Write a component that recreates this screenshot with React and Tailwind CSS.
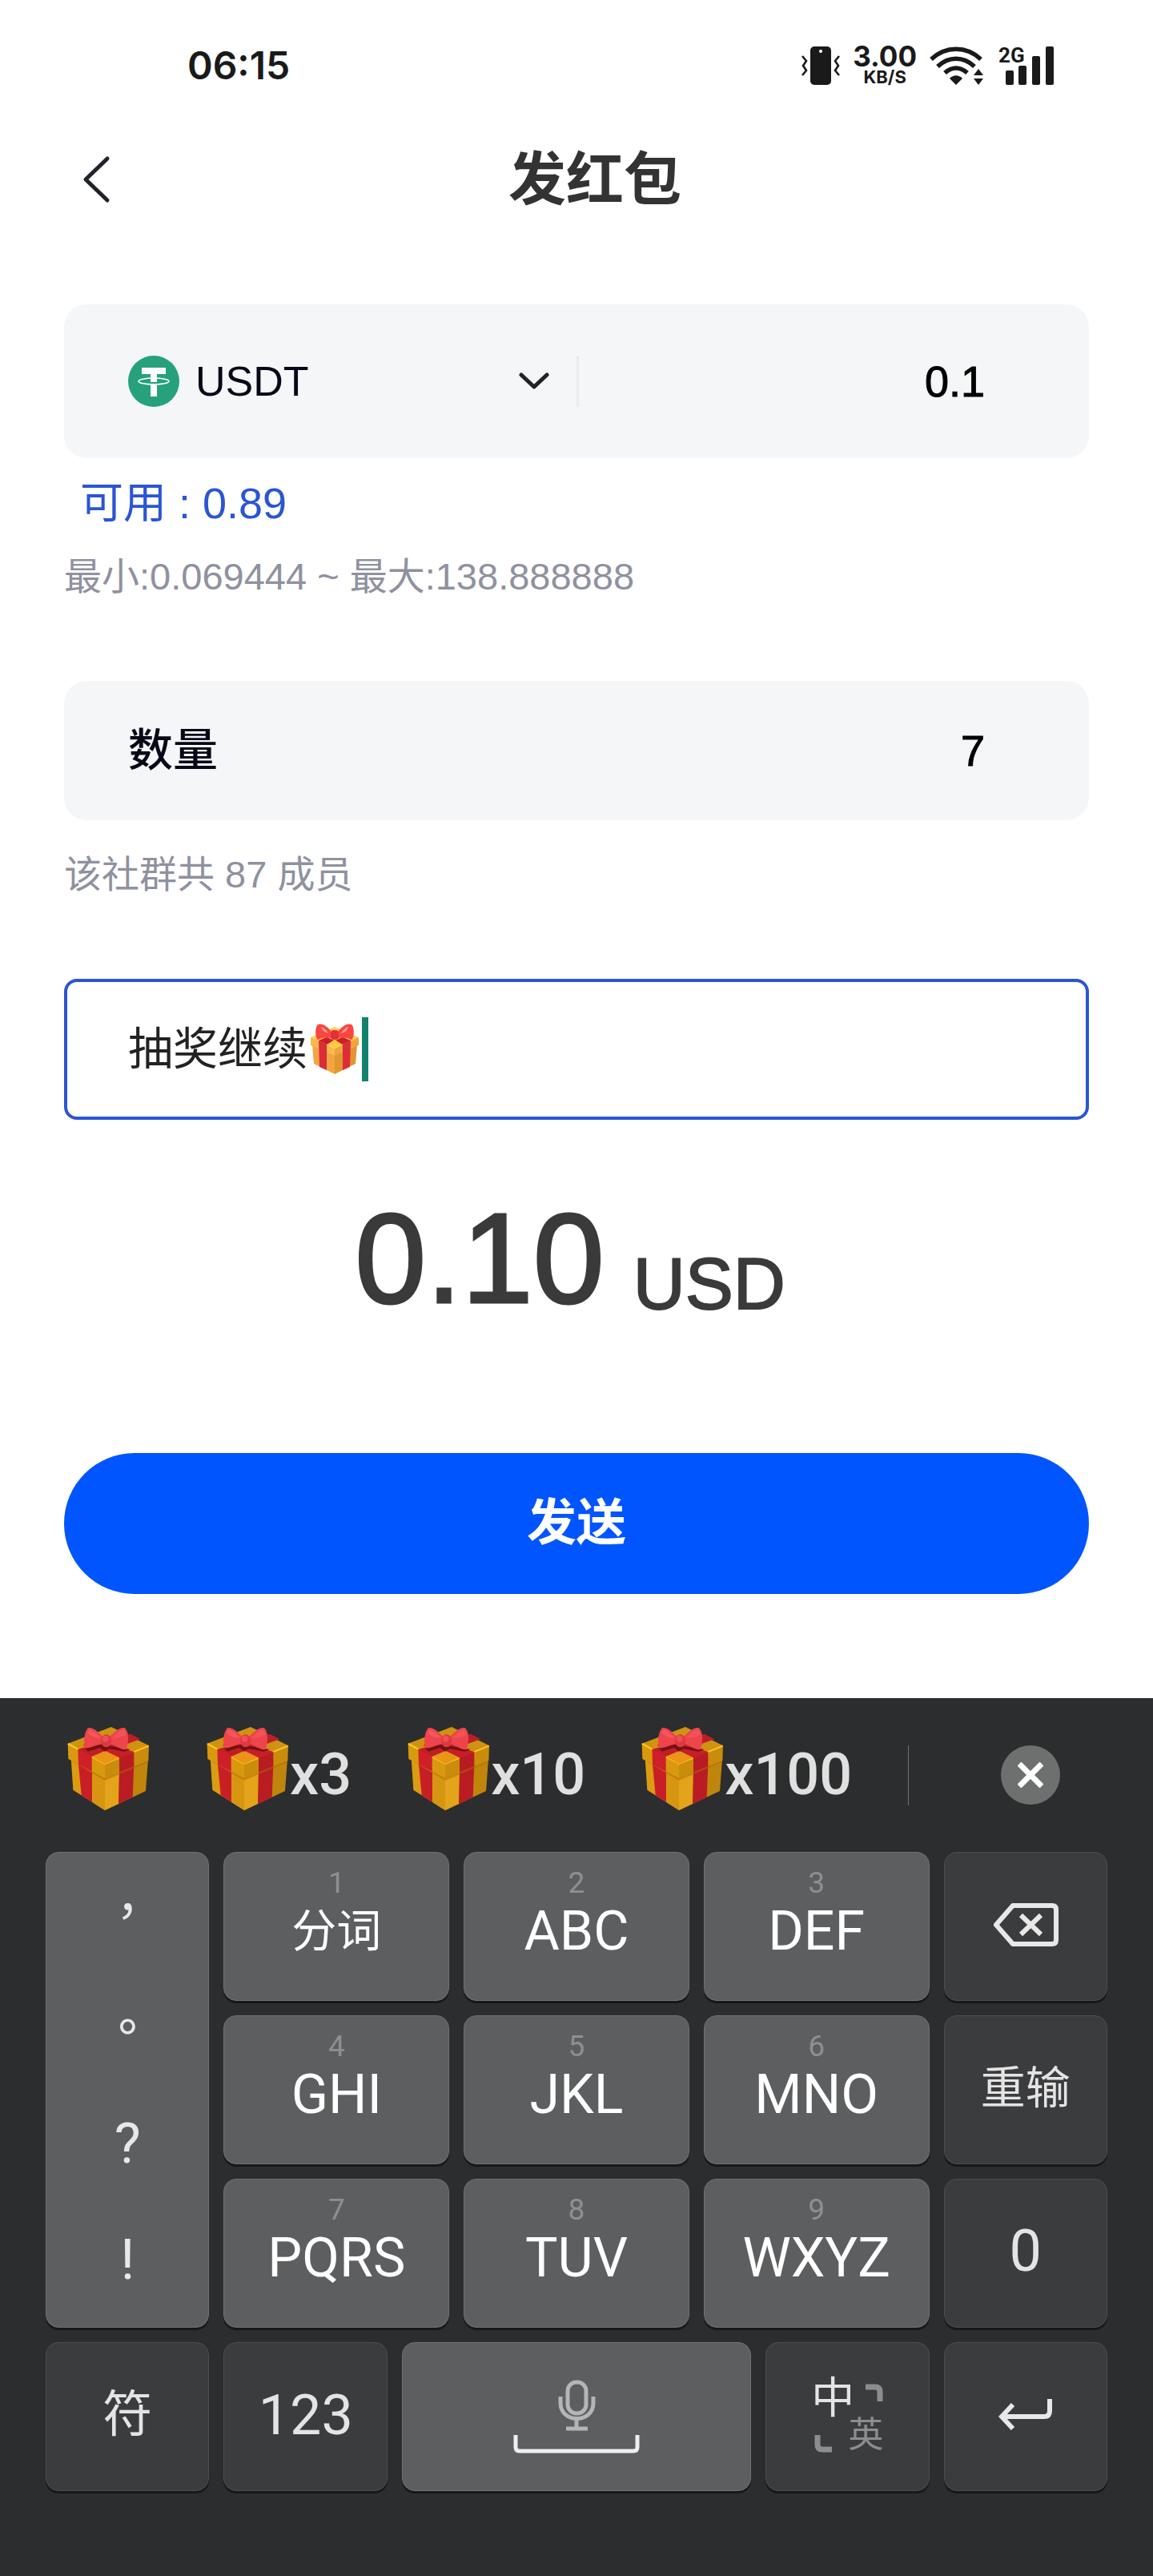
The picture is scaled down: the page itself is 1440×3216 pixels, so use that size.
import { useState } from "react";

const letterKeys = [
  { hint: "1", label: "分词" },
  { hint: "2", label: "ABC" },
  { hint: "3", label: "DEF" },
  { hint: "4", label: "GHI" },
  { hint: "5", label: "JKL" },
  { hint: "6", label: "MNO" },
  { hint: "7", label: "PQRS" },
  { hint: "8", label: "TUV" },
  { hint: "9", label: "WXYZ" },
];

const candidates = ["", "x3", "x10", "x100"];

const lightKey =
  "rounded-2xl border border-[#707173] bg-[#5d5e60] shadow-[0_3px_0_#17181a]";
const darkKey =
  "flex h-[186px] items-center justify-center rounded-2xl border border-[#4c4d4f] bg-[#3b3c3e] pb-1 text-[#e4e4e4] shadow-[0_3px_0_#17181a]";

const GiftBox = () => (
  <svg viewBox="0 0 312 312" className="mb-4 size-[104px] shrink-0" aria-hidden="true">
    {/* box */}
    <path d="M14 118L22 236L141 312V180Z" fill="#dc9c12" />
    <path d="M303 120L294 240L141 312V180Z" fill="#c0850c" />
    <path d="M93 150L97 284L141 312V180Z" fill="#d69612" />
    <path d="M141 180L195 156L192 288L141 312Z" fill="#e3a31a" />
    <path d="M42 140L53 256L93 281V170Z" fill="#c81f27" />
    <path d="M250 140L245 263L192 288L195 165Z" fill="#b91c22" />
    <path d="M13 126L141 200L303 132V120L141 180L13 118Z" fill="#a86c08" opacity=".5" />
    {/* lid */}
    <path d="M2 62L4 120L141 192V136Z" fill="#d9990e" />
    <path d="M306 70L304 126L141 192V136Z" fill="#c98c0c" />
    <path d="M2 62L165 0L306 70L141 140Z" fill="#cf9212" />
    <path d="M90 114L146 88L195 114L141 140Z" fill="#ea9417" />
    <path d="M3 63L141 138L305 71" fill="none" stroke="#fbc722" strokeWidth="6" />
    <path d="M40 82L92 110V167L42 141Z" fill="#cf2029" />
    <path d="M195 114L250 92V148L195 170Z" fill="#b81c22" />
    <path d="M40 84L92 111L274 46L236 26Z" fill="#c01e26" />
    <path d="M82 44L60 70L195 116L250 93Z" fill="#c61f27" />
    <path d="M92 111L142 89L195 115L141 139Z" fill="#ea9418" />
    <path d="M66 80L126 66L236 84L214 92L158 82L140 92L122 78L78 92Z" fill="#741212" />
    {/* bow */}
    <path d="M78 4C90-2 116 16 136 40V64C112 62 84 84 68 78C60 64 62 20 78 4Z" fill="#ee444b" />
    <path d="M216 4C202-2 176 16 156 40V64C178 66 204 90 222 84C224 70 238 28 216 4Z" fill="#ee444b" />
    <path d="M82 10C92 12 110 24 126 42C106 42 88 36 76 22Z" fill="#fb6a6d" opacity=".5" />
    <path d="M212 10C200 12 184 24 168 42C188 42 208 38 222 28Z" fill="#fb6a6d" opacity=".4" />
    <ellipse cx="146" cy="52" rx="20" ry="24" fill="#de3840" />
    <ellipse cx="143" cy="44" rx="11" ry="12" fill="#f45c61" opacity=".7" />
  </svg>
);

const SmallGift = () => (
  <svg viewBox="0 0 60 64" className="h-16 w-15 shrink-0" aria-hidden="true">
    <path d="M2 26L30 34V63L4 50Z" fill="#f2a640" />
    <path d="M58 26L30 34V63L56 50Z" fill="#e2962f" />
    <path d="M0 17L30 4L60 17L30 31Z" fill="#ffd04f" />
    <path d="M0 17L30 31V40L0 27Z" fill="#fbb84e" />
    <path d="M60 17L30 31V40L60 27Z" fill="#efa53c" />
    <path d="M10 21L20 26V58L11 54Z" fill="#dc2b3a" />
    <path d="M50 21L40 26V58L49 54Z" fill="#dc2b3a" />
    <path d="M10 21L42 8L50 12L20 26ZM50 21L18 8L10 12L40 26Z" fill="#c81f2b" />
    <path d="M30 20L38 25L30 30L22 25Z" fill="#ffc83d" />
    <path d="M28 14C22 2 12-2 8 2C5 8 6 18 9 20C16 17 23 17 28 19Z" fill="#fb4540" />
    <path d="M32 14C38 2 48-2 52 2C55 8 54 18 51 20C44 17 37 17 32 19Z" fill="#fb4540" />
    <path d="M13 4C17 5 20 8 22 12C17 11 14 8 13 4ZM47 4C43 5 40 8 38 12C43 11 46 8 47 4Z" fill="#ff9a94" />
    <rect x="25" y="8" width="10" height="12" rx="4" fill="#e2303a" />
  </svg>
);

const StatusBar = () => (
  <div className="flex h-[164px] items-center justify-between pr-[124px] pl-[234px] font-['Inter',sans-serif] font-semibold text-[#1a1a1a]">
    <span className="text-[48px] leading-none">06:15</span>
    <div className="flex items-center">
      {/* vibrate */}
      <svg viewBox="0 0 48 48" className="mr-4 size-12" fill="none" stroke="#1a1a1a" strokeWidth="2.6">
        <rect x="11" y="0" width="26" height="48" rx="5" fill="#1a1a1a" stroke="none" />
        <circle cx="24" cy="6" r="2" fill="#fff" stroke="none" />
        <path d="M1 12L6 18L2 24L6 30L1 36M47 12L42 18L46 24L42 30L47 36" />
      </svg>
      <div className="mr-4 flex flex-col items-center font-bold">
        <span className="text-[35px] leading-7">3.00</span>
        <span className="text-[22px] leading-6">KB/S</span>
      </div>
      {/* wifi */}
      <svg viewBox="0 0 67 48" className="mr-5 h-12 w-[67px]" fill="none" stroke="#1a1a1a" strokeWidth="5.5">
        <path d="M2 16C20-1 46-1 64 16M10 25C24 12 42 12 56 25M19 33C28 25 38 25 47 33" />
        <path d="M25 40C30 35 36 35 41 40L33 48Z" fill="#1a1a1a" stroke="none" />
        <path d="M55 36L61 28L67 36ZM55 40L61 48L67 40Z" fill="#1a1a1a" stroke="none" />
      </svg>
      {/* signal */}
      <svg viewBox="0 0 68 48" className="h-12 w-[68px] overflow-visible" fill="#1a1a1a">
        <text x="-1" y="20" className="font-['Roboto',sans-serif] text-[26px] font-bold">2G</text>
        <rect x="8" y="30" width="10" height="18" rx="2" />
        <rect x="24" y="24" width="10" height="24" rx="2" />
        <rect x="41" y="12" width="10" height="36" rx="2" />
        <rect x="58" y="0" width="10" height="48" rx="2" />
      </svg>
    </div>
  </div>
);

const Keyboard = () => (
  <section className="grow bg-[#2c2d2f] pb-[106px] font-['Roboto','Noto_Sans_CJK_SC',sans-serif]">
    {/* Candidates */}
    <div className="flex h-48 items-center gap-[70px] pr-[116px] pl-[84px]">
      {candidates.map((text) => (
        <button key={text} aria-label={`礼物${text}`} className="flex items-center text-[72px] leading-none font-medium text-[#e0e0e0]">
          <GiftBox />
          {text}
        </button>
      ))}
      <span className="h-[75px] w-px bg-[#707173]" />
      <button aria-label="关闭" className="ml-auto flex size-[74px] items-center justify-center rounded-full bg-[#6e706f]">
        <svg viewBox="0 0 32 32" className="size-8" stroke="#fff" strokeWidth="7">
          <path d="M2 2L30 30M30 2L2 30" />
        </svg>
      </button>
    </div>

    <div className="flex flex-col gap-[18px] px-[57px]">
      <div className="grid grid-cols-[204fr_879fr_204fr] gap-[18px]">
        {/* Punctuation */}
        <div className={`${lightKey} grid grid-rows-4 pb-3 text-[#e8e8e8]`}>
          <button className="pb-2 font-['Noto_Sans_CJK_TC',sans-serif] text-[60px] leading-none" lang="zh-TW">，</button>
          <button className="pb-2 font-['Noto_Sans_CJK_TC',sans-serif] text-[60px] leading-none font-medium" lang="zh-TW">。</button>
          <button className="text-[70px] leading-none">?</button>
          <button className="text-[70px] leading-none">!</button>
        </div>

        {/* Letters */}
        <div className="grid grid-cols-3 gap-[18px]">
          {letterKeys.map(({ hint, label }) => (
            <button key={hint} className={`${lightKey} flex h-[186px] flex-col items-center pt-[18px] text-white`}>
              <span className="text-[37px] leading-10 text-[#8e8f91]">{hint}</span>
              <span className={`leading-20 ${hint === "1" ? "text-[56px]" : "text-[68px]"}`}>{label}</span>
            </button>
          ))}
        </div>

        <div className="flex flex-col gap-[18px]">
          <button aria-label="删除" className={darkKey}>
            <svg viewBox="0 0 82 54" className="h-[54px] w-[82px]" fill="none" stroke="#e8e8e8" strokeWidth="6">
              <path d="M25 3H74Q79 3 79 8V46Q79 51 74 51H25L4 27Z" strokeLinejoin="round" />
              <path d="M35 15L60 39M60 15L35 39" />
            </svg>
          </button>
          <button className={`${darkKey} text-[56px] leading-none`}>重输</button>
          <button className={`${darkKey} text-[72px] leading-none`}>0</button>
        </div>
      </div>

      <div className="grid grid-cols-[204fr_204fr_435fr_204fr_204fr] gap-[18px]">
        <button className={`${darkKey} text-[62px] leading-none`}>符</button>
        <button className={`${darkKey} text-[70px] leading-none`}>123</button>
        <button aria-label="空格" className={`${lightKey} flex items-center justify-center`}>
          <svg viewBox="0 0 158 92" className="h-[92px] w-[158px]" fill="none" strokeWidth="5">
            <g stroke="#b4b5b6">
              <rect x="68" y="3" width="23" height="39" rx="11" />
              <path d="M59 21V29C59 55 100 55 100 29V21M79 50V60M66 61H93" />
            </g>
            <path d="M3 69V84Q3 89 8 89H150Q155 89 155 84V69" stroke="#efefef" />
          </svg>
        </button>
        <button aria-label="中英切换" className={darkKey}>
          <span className="grid grid-cols-[46px_44px] grid-rows-[50px_44px]">
            <span className="text-[54px] leading-[54px]">中</span>
            <svg viewBox="0 0 22 22" className="mt-2 size-[22px] justify-self-end" fill="none" stroke="#8c8d8f" strokeWidth="7">
              <path d="M0 4H12Q18 4 18 10V22" />
            </svg>
            <svg viewBox="0 0 22 22" className="ml-1 size-[22px] self-end" fill="none" stroke="#8c8d8f" strokeWidth="7">
              <path d="M4 0V12Q4 18 10 18H22" />
            </svg>
            <span className="text-[44px] leading-[44px] text-[#8c8d8f]">英</span>
          </span>
        </button>
        <button aria-label="换行" className={darkKey}>
          <svg viewBox="0 0 68 40" className="h-10 w-[68px]" fill="none" stroke="#e8e8e8" strokeWidth="6">
            <path d="M64 0V15Q64 22 57 22H5M18 7L4 22L18 37" />
          </svg>
        </button>
      </div>
    </div>
  </section>
);

const App = () => {
  const [amount, setAmount] = useState("0.1");
  const [count, setCount] = useState("7");
  const [message, setMessage] = useState("抽奖继续");

  return (
    <div className="flex min-h-screen flex-col bg-white font-['Liberation_Sans','Noto_Sans_CJK_SC',sans-serif]" lang="zh-CN">
      <StatusBar />

      {/* Title */}
      <header className="flex h-[120px] items-center pl-[100px]">
        <button aria-label="返回">
          <svg viewBox="0 0 40 60" className="h-[60px] w-10" fill="none" stroke="#20242a" strokeWidth="5" strokeLinecap="round" strokeLinejoin="round">
            <path d="M34 4L7 30L34 56" />
          </svg>
        </button>
        <h1 className="flex-1 pr-[94px] text-center text-[72px] leading-none font-bold text-[#333]">发红包</h1>
      </header>

      <main className="flex flex-col px-20 pt-24 pb-[130px]">
        {/* Currency and amount */}
        <div className="grid h-48 grid-cols-2 items-center rounded-[28px] bg-[#f4f6f8]">
          <div className="flex items-center gap-5 pl-20">
            <svg viewBox="0 0 64 64" className="size-16 shrink-0" aria-hidden="true">
              <circle cx="32" cy="32" r="32" fill="#26a17b" />
              <path d="M17 15H47V23H36V33H28V23H17ZM28 35H36V51H28Z" fill="#fff" />
              <ellipse cx="32" cy="32" rx="19" ry="4" fill="none" stroke="#fff" strokeWidth="1.6" />
            </svg>
            <div className="relative flex flex-1 items-center">
              <select aria-label="币种" className="w-full appearance-none bg-transparent text-[52px] leading-16 text-[#060818]">
                <option>USDT</option>
              </select>
              <svg viewBox="0 0 40 22" className="pointer-events-none absolute right-8 h-[22px] w-10" fill="none" stroke="#222" strokeWidth="5" strokeLinecap="round" strokeLinejoin="round">
                <path d="M3 3L19 18L35 3" />
              </svg>
            </div>
          </div>
          <input
            aria-label="金额"
            value={amount}
            onChange={(e) => setAmount(e.target.value)}
            className="min-w-0 border-l-3 border-[#e9ebee] pr-[130px] text-right text-[54px] leading-16 text-black outline-none [-webkit-text-stroke:1px]"
          />
        </div>
        <p className="mt-4 pl-5 text-[54px] leading-20 text-[#2a55d4]">可用 : 0.89</p>
        <p className="mt-5 text-[47px] leading-16 text-[#8f91a0]">最小:0.069444 ~ 最大:138.888888</p>

        {/* Quantity */}
        <div className="mt-[98px] flex h-[174px] items-center rounded-[28px] bg-[#f4f6f8] pr-[130px] pl-20">
          <label htmlFor="count" className="text-[56px] leading-16 font-medium text-[#060818]">数量</label>
          <input
            id="count"
            value={count}
            onChange={(e) => setCount(e.target.value)}
            className="min-w-0 flex-1 text-right text-[54px] leading-16 text-black outline-none [-webkit-text-stroke:1px]"
          />
        </div>
        <p className="mt-9 text-[47px] leading-16 text-[#8f91a0]">该社群共 87 成员</p>

        {/* Message */}
        <label className="mt-[98px] flex h-44 items-center rounded-2xl border-4 border-[#2a55d4] pl-[76px]">
          <input
            aria-label="留言"
            value={message}
            onChange={(e) => setMessage(e.target.value)}
            className="field-sizing-content mr-1 text-[56px] leading-16 text-[#222] outline-none"
          />
          <SmallGift />
          <span className="ml-1 h-20 w-2 bg-[#10836f]" />
        </label>

        <div className="mt-[93px] flex items-end justify-center gap-9 pr-4 text-[#3a3a3a]">
          <span className="text-[160px] leading-none [-webkit-text-stroke:3px]">0.10</span>
          <span className="text-[90px] leading-24 [-webkit-text-stroke:2px]">USD</span>
        </div>

        <button className="mt-[163px] h-44 rounded-full bg-[#0055ff] text-[62px] leading-none font-bold text-white">
          发送
        </button>
      </main>

      <Keyboard />
    </div>
  );
};

export default App;
